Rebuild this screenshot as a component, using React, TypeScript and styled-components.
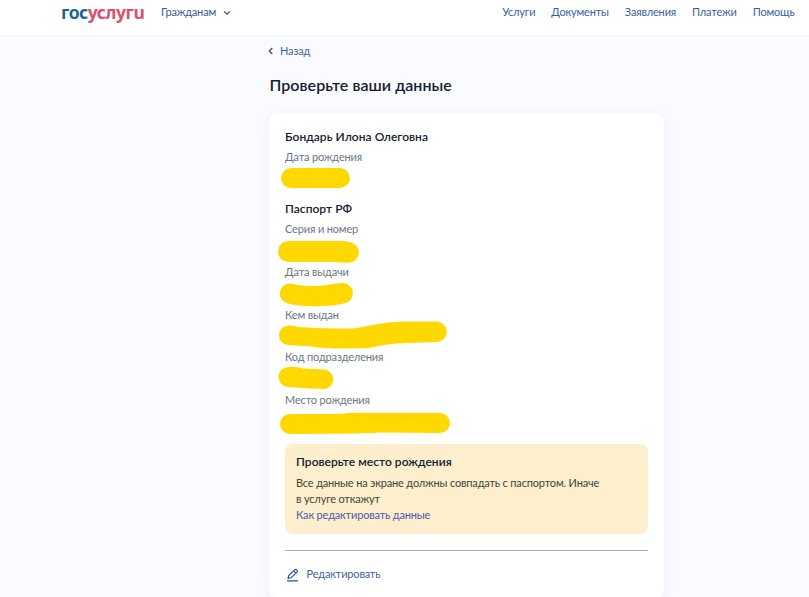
import React from 'react';
import styled, { createGlobalStyle } from 'styled-components';

const GlobalStyle = createGlobalStyle`
  * { box-sizing: border-box; }
  body {
    margin: 0;
    background: #fafbff;
    font-family: Lato, "Open Sans", sans-serif;
    font-size: 11px;
    color: #0b1f33;
    overflow: hidden;
  }
  h1, h2, p { margin: 0; }
`;

const Page = styled.div`
  height: 597px;
  overflow: hidden;
`;

const Header = styled.header`
  display: flex;
  align-items: flex-start;
  height: 36px;
  padding: 0 14.500px 0 61px;
  background: #fff;
  border-bottom: 1px solid #f3f4f8;
`;

const Logo = styled.div`
  width: 100px;
  font: 700 17.5px/24px "Noto Sans", sans-serif;
  letter-spacing: -0.45px;
  color: #1b6596;
  white-space: nowrap;
  span { color: #d9506a; }
`;

const Audience = styled.a`
  display: flex;
  align-items: center;
  gap: 7px;
  line-height: 24px;
  letter-spacing: -0.18px;
  color: #3a5795;
  svg { margin-top: 2px; }
`;

const Nav = styled.nav`
  display: flex;
  gap: 16px;
  margin-left: auto;
`;

const NavLink = styled.a`
  line-height: 24px;
  color: #3a5f9f;
  white-space: nowrap;
  letter-spacing: -0.18px;
`;

const Content = styled.main`
  width: 395px;
  margin-left: 269px;
`;

const Back = styled.a`
  display: flex;
  align-items: center;
  gap: 7px;
  height: 16px;
  margin-top: 7px;
  padding-bottom: 1px;
  letter-spacing: -0.15px;
  color: #4a5e9c;
  svg { margin-left: -1px; margin-top: 1px; }
`;

const Title = styled.h1`
  height: 24px;
  margin-top: 14px;
  padding-left: 0.500px;
  font-size: 16px;
  font-weight: 600;
  line-height: 24px;
  letter-spacing: 0.05px;
  color: #14202f;
`;

const Card = styled.section`
  height: 485px;
  margin-top: 16px;
  padding: 16px;
  border-radius: 9px;
  background: #fff;
  box-shadow: 0 2px 14px rgba(90, 120, 200, 0.09);
`;

const Heading = styled.h2`
  height: 16px;
  font-size: 12px;
  font-weight: 600;
  line-height: 16px;
  letter-spacing: 0.04px;
  color: #14202f;
`;

const Field = styled.div<{ $height: number; $gap?: number }>`
  height: ${(p) => p.$height}px;
  margin-top: ${(p) => p.$gap ?? 0}px;
`;

const Label = styled.div`
  height: 16px;
  line-height: 16px;
  letter-spacing: -0.15px;
  color: #6b7683;
`;

const Marker = styled.svg`
  display: block;
  margin-left: -9px;
  overflow: visible;
`;

const Notice = styled.section`
  height: 90px;
  padding: 10px 11px;
  border-radius: 8px;
  background: #fdeecd;
  line-height: 16px;
  color: #414637;
`;

const NoticeText = styled.p`
  margin-top: 5px;
  letter-spacing: -0.17px;
`;

const NoticeLink = styled.a`
  letter-spacing: -0.17px;
  color: #5058ae;
`;

const Divider = styled.div`
  height: 1px;
  margin: 16px 0 15px;
  background: #9fafc2;
`;

const Edit = styled.a`
  display: flex;
  align-items: center;
  gap: 6.500px;
  height: 15px;
  padding-left: 1px;
  letter-spacing: -0.16px;
  color: #4a5e9c;
  svg { margin-top: 2px; }
`;

const Stroke = ({ d }: { d: string }) => (
  <Marker width="190" height="26" viewBox="0 0 190 26">
    <path d={d} fill="#ffd800" />
  </Marker>
);

const passport = [
  { label: 'Серия и номер', height: 43, d: 'M12.500 4H66Q69 4 73 5A10.300 10.300 0 0 1 72 25.700Q67 26 61 25H12.500A10.500 10.500 0 0 1 12.500 4Z' },
  { label: 'Дата выдачи', height: 43, d: 'M13 3.500Q17 3 21 5Q37 7 52 5Q60 3 66 3A10.300 10.300 0 0 1 70 23Q59 26 44 26Q26 27 12 23.500A10.100 10.100 0 0 1 13 3.500Z' },
  { label: 'Кем выдан', height: 42, d: 'M12 2.500Q18 2 23 4Q39 5 58 5.500H76Q87 4 99 1.500Q112 -1 127 -1.500H160.500A10.200 10.200 0 0 1 160.500 19L121 20.500Q110 21 98 24Q88 26 76 25.500Q50 26 36 23.500L11.500 22A9.800 9.800 0 0 1 12 2.500Z' },
  { label: 'Код подразделения', height: 43, d: 'M13 2Q20 1 27 3.500L48.500 4.500A9.800 9.800 0 0 1 48.500 24L34 23.500 12 22A10 10 0 0 1 13 2Z' },
  { label: 'Место рождения', height: 52, d: 'M14 6H67Q72 4.500 79 4.700L83 5H164A10 10 0 0 1 164 25L107 24.500 79 25.500 14 26A10 10 0 0 1 14 6Z' },
];

export default function App() {
  return (
    <>
      <GlobalStyle />
      <Page>
        <Header>
          <Logo>гос<span>услугu</span></Logo>
          <Audience>
            Гражданам
            <svg width="8" height="6" viewBox="0 0 8 6" fill="none" stroke="#3a5795" strokeWidth="1.200">
              <path d="M1 1.500L4 4.300L7 1.500" />
            </svg>
          </Audience>
          <Nav>
            <NavLink>Услуги</NavLink>
            <NavLink>Документы</NavLink>
            <NavLink>Заявления</NavLink>
            <NavLink>Платежи</NavLink>
            <NavLink>Помощь</NavLink>
          </Nav>
        </Header>
        <Content>
          <Back>
            <svg width="5" height="8" viewBox="0 0 5 8" fill="none" stroke="#3d4d86" strokeWidth="1.300">
              <path d="M4.300 1L1.300 4L4.300 7" />
            </svg>
            Назад
          </Back>
          <Title>Проверьте ваши данные</Title>
          <Card>
            <Heading>Бондарь Илона Олеговна</Heading>
            <Field $height={52} $gap={4}>
              <Label>Дата рождения</Label>
              <Stroke d="M15 3H64A10 10 0 0 1 64 23H15A10 10 0 0 1 15 3Z" />
            </Field>
            <Heading>Паспорт РФ</Heading>
            {passport.map((item, i) => (
              <Field key={item.label} $height={item.height} $gap={i === 0 ? 4 : 0}>
                <Label>{item.label}</Label>
                <Stroke d={item.d} />
              </Field>
            ))}
            <Notice>
              <Heading>Проверьте место рождения</Heading>
              <NoticeText>
                Все данные на экране должны совпадать с паспортом. Иначе<br />в услуге откажут
              </NoticeText>
              <NoticeLink>Как редактировать данные</NoticeLink>
            </Notice>
            <Divider />
            <Edit>
              <svg width="14" height="14" viewBox="0 0 14 14" fill="none" stroke="#2f4f8b" strokeWidth="1.150" strokeLinejoin="round">
                <path d="M2 10.500L2.800 7.500L8.700 1.800Q9.600 1 10.600 2L11 2.400Q11.900 3.300 11 4.200L5.200 9.700ZM7.700 2.900L9.900 5.100M1 12.800H12" />
              </svg>
              Редактировать
            </Edit>
          </Card>
        </Content>
      </Page>
    </>
  );
}
